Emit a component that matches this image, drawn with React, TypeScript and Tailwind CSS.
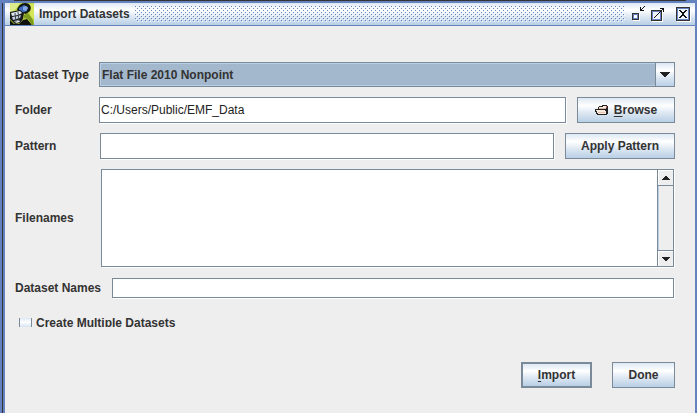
import { useState } from "react";
import type { ReactNode } from "react";

const gradient =
  "bg-[linear-gradient(to_bottom,#dde8f3_0%,#ffffff_32%,#dfe9f3_60%,#b8cfe5_100%)]";
const field =
  "min-w-0 flex-1 border border-[#7a8a99] bg-white px-px text-[12px] text-[#222222] shadow-[1px_1px_0_#ffffff] outline-none";

function PushButton({
  children,
  className = "",
  isDefault = false,
}: {
  children: ReactNode;
  className?: string;
  isDefault?: boolean;
}) {
  return (
    <button
      type="button"
      className={`flex h-[26px] shrink-0 items-center justify-center border-[#7a8a99] font-bold ${gradient} ${
        isDefault ? "border-2" : "border"
      } ${className}`}
    >
      {children}
    </button>
  );
}

function ComboArrow() {
  return (
    <svg width="10" height="5" shapeRendering="crispEdges" fill="#222222" aria-hidden="true">
      <path d="M0 0h10v1H9v1H8v1H7v1H6v1H4V4H3V3H2V2H1V1H0z" />
    </svg>
  );
}

function ScrollArrow({ up = false }: { up?: boolean }) {
  return (
    <svg width="8" height="4" shapeRendering="crispEdges" fill="#222222" aria-hidden="true">
      <path
        d={up ? "M3 0h2v1h1v1h1v1h1v1H0V3h1V2h1V1h1z" : "M0 0h8v1H7v1H6v1H5v1H3V3H2V2H1V1H0z"}
      />
    </svg>
  );
}

function AppIcon() {
  return (
    <svg width="24" height="22" viewBox="0 0 24 22" className="shrink-0" aria-hidden="true">
      <rect width="24" height="22" fill="#bcd744" />
      <path d="M0 0h10L5 7 0 10z" fill="#dcec8c" />
      <path d="M19 1h5v15l-4-4z" fill="#d3e65a" />
      <path d="M7 7C8 3 11 0 15 0c5 0 7 4 5 8l-4 3-4-1z" fill="#14170f" />
      <path d="M9 5l5-3 4 2-1 4-5 2-3-1z" fill="#3c68bd" />
      <path d="M13 4l3-1 2 2-2 3-3-1z" fill="#86a9e4" />
      <path d="M0 9l10-2 4 3-1 6-3 4-5 1-5-5z" fill="#17191b" />
      <path d="M1 10l9-2 2 2-4 2-6 1z" fill="#dfe7ef" />
      <path d="M2 14l6-1 3-1-1 3-7 2z" fill="#c3ced9" />
      <path d="M4 18l5-1 1 2-4 1z" fill="#e3e8ec" />
      <path d="M5 10l1 9M8 9l1 9" stroke="#3b4650" fill="none" />
      <path d="M0 17l4 4 5 0 4-4 4-1 5 6H0z" fill="#10130b" />
      <path d="M14 12l4-2 5 7 1 5h-2l-4-6-4-1z" fill="#7d9a1f" />
    </svg>
  );
}

function TitleDots() {
  return (
    <svg className="h-4 min-w-0 flex-1" shapeRendering="crispEdges" aria-hidden="true">
      <defs>
        <pattern id="dots" width="4" height="4" patternUnits="userSpaceOnUse">
          <path d="M0 0h1v1H0zM2 2h1v1H2z" fill="#6382bf" />
          <path d="M1 1h1v1H1zM3 3h1v1H3z" fill="#ffffff" />
        </pattern>
      </defs>
      <rect width="100%" height="100%" fill="url(#dots)" />
    </svg>
  );
}

function MinimizeIcon() {
  return (
    <svg width="16" height="16" shapeRendering="crispEdges" fill="none" aria-hidden="true">
      <path d="M2 8h7v7H2z" fill="#ffffff" />
      <path d="M1 7h7v7H1z" fill="#333333" />
      <path d="M2 8h5v5H2z" fill="#6382bf" />
      <path d="M3 9h3v3H3z" fill="#ffffff" />
      <path d="M9 1h1v3h3v1H9zM10 3h1v1h-1zM11 2h1v1h-1zM12 1h1v1h-1zM13 0h1v1h-1z" fill="#111111" />
    </svg>
  );
}

function MaximizeIcon() {
  return (
    <svg width="16" height="16" shapeRendering="crispEdges" fill="none" aria-hidden="true">
      <path d="M1 5h11v11H1z" fill="#ffffff" />
      <path d="M0 4h11v11H0z" fill="#333333" />
      <path d="M1 5h9v9H1z" fill="#6382bf" />
      <path d="M2 6h7v7H2z" fill="#eef4fa" />
      <path
        d="M3 11h1v1H3zM4 10h1v1H4zM5 9h1v1H5zM6 8h1v1H6zM7 7h1v1H7zM8 6h1v1H8zM9 5h1v1H9zM10 4h1v1h-1zM11 3h1v1h-1zM9 2h4v4h-1V3H9z"
        fill="#111111"
      />
    </svg>
  );
}

function CloseIcon() {
  return (
    <svg width="16" height="16" shapeRendering="crispEdges" fill="none" aria-hidden="true">
      <path d="M2 2h14v14H2z" fill="#ffffff" />
      <path d="M1 1h14v14H1z" fill="#333333" />
      <path d="M2 2h12v12H2z" fill="#6382bf" />
      <path d="M3 3h10v10H3z" fill="#eef4fa" />
      <path
        d="M4 4h2v1h1v1h2V5h1V4h2v1h-1v1h-1v1H9v2h1v1h1v1h1v1h-2v-1H9v-1H7v1H6v1H4v-1h1v-1h1V9h1V7H6V6H5V5H4z"
        fill="#111111"
      />
    </svg>
  );
}

function FolderIcon() {
  return (
    <svg width="14" height="10" shapeRendering="crispEdges" aria-hidden="true">
      <path d="M4 1h3V0h5v1h1v8h-1v1H2V9H1V7H0V4h3V2h1z" fill="#222222" />
      <path d="M4 2h4V1h3v1h1v1H4z" fill="#fbe9dc" />
      <path d="M11 1h1v2h-1z" fill="#b05a5a" />
      <path d="M4 3h7v1H4z" fill="#d9b8a8" />
      <path d="M1 5h9v1h1v3H3V8H2V6H1z" fill="#fbe9dc" />
      <path d="M3 7h7v1H3z" fill="#e3c3b2" />
    </svg>
  );
}

export default function App() {
  const [folder, setFolder] = useState("C:/Users/Public/EMF_Data");
  const titleButton = "flex h-4 w-4 items-center justify-center";
  return (
    <div className="flex min-h-screen flex-col bg-[#6382bf] px-[2px] font-['Liberation_Sans',Arial,sans-serif] text-[12px] leading-4 text-[#333333]">
      <div className="mr-[9px] ml-3 h-px bg-[#333333]" />
      <div className="mt-[2px] flex flex-1 border-l border-[#333333] pl-[2px]">
        <main className="min-w-0 flex-1 bg-[#eeeeee]">
          <header
            className={`flex h-[23px] items-center border-b border-[#6382bf] pr-1 pl-[5px] ${gradient}`}
          >
            <AppIcon />
            <h1 className="ml-[5px] shrink-0 font-bold leading-[18px]">Import Datasets</h1>
            <div className="ml-[5px] flex min-w-0 flex-1">
              <TitleDots />
            </div>
            <div className="ml-[6px] flex items-center">
              <button type="button" aria-label="Minimize" className={titleButton}>
                <MinimizeIcon />
              </button>
              <button type="button" aria-label="Maximize" className={`ml-1 ${titleButton}`}>
                <MaximizeIcon />
              </button>
              <button type="button" aria-label="Close" className={`ml-2 ${titleButton}`}>
                <CloseIcon />
              </button>
            </div>
          </header>

          <form className="flex flex-col pt-9 pr-5 pb-6 pl-[10px]" onSubmit={(e) => e.preventDefault()}>
            <div className="flex items-center">
              <label htmlFor="type" className="w-[84px] shrink-0 font-bold">
                Dataset Type
              </label>
              <div className="relative min-w-0 flex-1">
                <select
                  id="type"
                  className="block h-[25px] w-full appearance-none border border-[#7a8a99] bg-[#a3b8cc] pl-[2px] font-bold shadow-[inset_1px_1px_0_#b8cfe5,inset_-1px_-1px_0_#b8cfe5] outline-none"
                >
                  <option>Flat File 2010 Nonpoint</option>
                </select>
                <span
                  className={`pointer-events-none absolute inset-y-0 right-0 flex w-5 items-center justify-center border border-[#7a8a99] ${gradient}`}
                >
                  <ComboArrow />
                </span>
              </div>
            </div>

            <div className="mt-[10px] flex items-center">
              <label htmlFor="folder" className="w-[84px] shrink-0 font-bold">
                Folder
              </label>
              <input
                id="folder"
                type="text"
                value={folder}
                onChange={(e) => setFolder(e.target.value)}
                className={`h-[26px] ${field}`}
              />
              <PushButton className="ml-[11px] w-[98px] gap-[5px]">
                <FolderIcon />
                <span>
                  <span className="underline underline-offset-2">B</span>rowse
                </span>
              </PushButton>
            </div>

            <div className="mt-[10px] flex items-center">
              <label htmlFor="pattern" className="w-[85px] shrink-0 font-bold">
                Pattern
              </label>
              <input id="pattern" type="text" className={`h-[26px] ${field}`} />
              <PushButton className="ml-[11px] w-[110px]">Apply Pattern</PushButton>
            </div>

            <div className="mt-[10px] flex items-center">
              <label htmlFor="files" className="w-[86px] shrink-0 font-bold">
                Filenames
              </label>
              <div className="mr-px flex h-[98px] min-w-0 flex-1 border border-[#7a8a99] bg-white shadow-[1px_1px_0_#ffffff]">
                <textarea id="files" className="min-w-0 flex-1 resize-none px-px outline-none" />
                <div className="flex w-4 flex-col justify-between border-l border-[#7a8a99] bg-[#eeeeee] shadow-[inset_1px_0_0_#b8cfe5]">
                  <button
                    type="button"
                    aria-label="Scroll up"
                    className="flex h-4 items-center justify-center border-b border-[#7a8a99] shadow-[inset_1px_1px_0_#ffffff]"
                  >
                    <ScrollArrow up />
                  </button>
                  <button
                    type="button"
                    aria-label="Scroll down"
                    className="flex h-4 items-center justify-center border-t border-[#7a8a99] shadow-[inset_1px_1px_0_#ffffff]"
                  >
                    <ScrollArrow />
                  </button>
                </div>
              </div>
            </div>

            <div className="mt-[11px] flex items-center">
              <label htmlFor="names" className="w-[97px] shrink-0 font-bold">
                Dataset Names
              </label>
              <input id="names" type="text" className={`mr-px h-5 ${field}`} />
            </div>

            <div className="mt-[17px] flex h-3 items-start overflow-hidden pl-1">
              <label className="flex items-start font-bold">
                <input
                  type="checkbox"
                  className={`mt-[3px] mr-1 h-[13px] w-[13px] shrink-0 appearance-none border-x border-[#7a8a99] ${gradient}`}
                />
                Create Multiple Datasets
              </label>
            </div>

            <div className="mt-[35px] flex justify-end gap-5">
              <PushButton isDefault className="w-[71px]">
                <span>
                  <span className="underline underline-offset-2">I</span>mport
                </span>
              </PushButton>
              <PushButton className="w-[63px]">Done</PushButton>
            </div>
          </form>
        </main>
      </div>
    </div>
  );
}
